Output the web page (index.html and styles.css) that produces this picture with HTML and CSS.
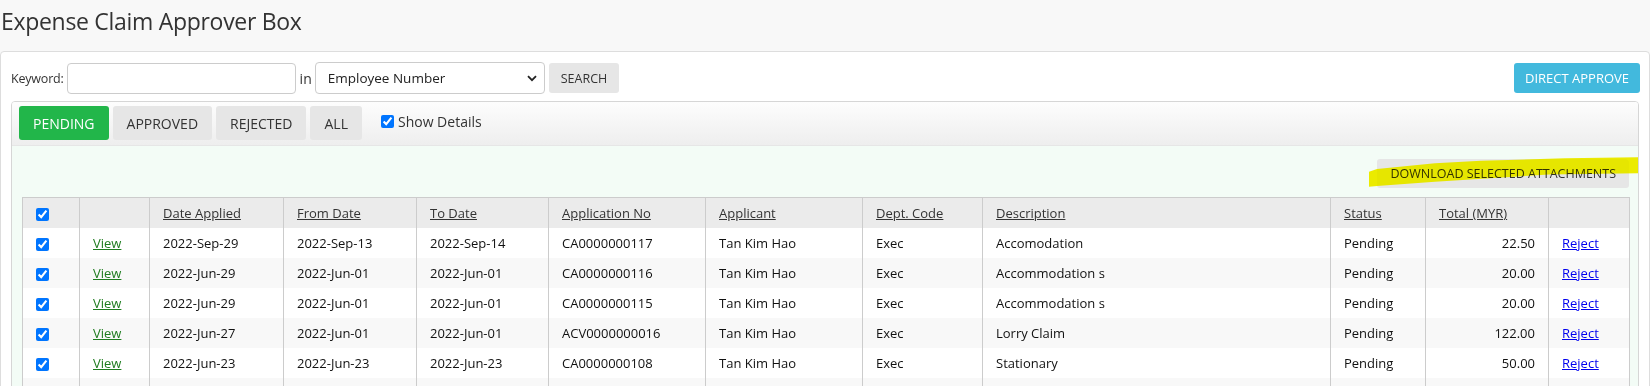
FILE: index.html
```html
<!DOCTYPE html>
<html lang="en">
<head>
    <meta charset="UTF-8">
    <meta name="viewport" content="width=device-width, initial-scale=1.0">
    <title>Expense Claim Approver Box</title>
    <link rel="stylesheet" href="styles.css">
</head>
<body>
    <h1 class="page-title">Expense Claim Approver Box</h1>

    <div class="box">
        <form class="search-bar" id="searchForm">
            <label for="keyword">Keyword:</label>
            <input type="text" id="keyword" name="keyword" class="field keyword">
            <span class="in">in</span>
            <div class="select-wrap">
                <select id="searchBy" name="searchBy" class="field search-by">
                    <option>Employee Number</option>
                    <option>Employee Name</option>
                    <option>Application No</option>
                </select>
                <svg class="chevron" width="10" height="7" viewBox="0 0 10 7"><path d="M1 1.2l4 4 4-4" fill="none" stroke="#222" stroke-width="1.8"/></svg>
            </div>
            <button type="submit" class="btn btn-gray btn-search">SEARCH</button>
            <button type="button" class="btn btn-info btn-direct">DIRECT APPROVE</button>
        </form>

        <div class="panel">
            <div class="panel-heading">
                <button type="button" class="tab active">PENDING</button>
                <button type="button" class="tab">APPROVED</button>
                <button type="button" class="tab">REJECTED</button>
                <button type="button" class="tab">ALL</button>
                <label class="show-details"><input type="checkbox" checked> Show Details</label>
            </div>

            <div class="panel-body">
                <div class="actions">
                    <div class="download-wrap">
                        <button type="button" class="btn btn-gray btn-download">DOWNLOAD SELECTED ATTACHMENTS</button>
                        <!-- highlighter mark over the button -->
                        <svg class="marker" width="270" height="31" viewBox="0 0 270 31"><path d="M0 14.7 L8 12 L66 6.3 L112 3.7 L196 1.3 L270 0.3 L270 16.3 L180 17.5 L66 24.7 L8 29 L0 29.7 Z" fill="#ebeb00"/></svg>
                    </div>
                </div>

                <table class="claims">
                    <colgroup>
                        <col style="width:57px">
                        <col style="width:70px">
                        <col style="width:134px">
                        <col style="width:133px">
                        <col style="width:132px">
                        <col style="width:157px">
                        <col style="width:157px">
                        <col style="width:120px">
                        <col style="width:348px">
                        <col style="width:95px">
                        <col style="width:123px">
                        <col style="width:81px">
                    </colgroup>
                    <thead>
                        <tr>
                            <th><input type="checkbox" checked></th>
                            <th></th>
                            <th><a href="#">Date Applied</a></th>
                            <th><a href="#">From Date</a></th>
                            <th><a href="#">To Date</a></th>
                            <th><a href="#">Application No</a></th>
                            <th><a href="#">Applicant</a></th>
                            <th><a href="#">Dept. Code</a></th>
                            <th><a href="#">Description</a></th>
                            <th><a href="#">Status</a></th>
                            <th><a href="#">Total (MYR)</a></th>
                            <th></th>
                        </tr>
                    </thead>
                    <tbody>
                        <tr>
                            <td><input type="checkbox" checked></td>
                            <td><a href="#" class="view">View</a></td>
                            <td>2022-Sep-29</td>
                            <td>2022-Sep-13</td>
                            <td>2022-Sep-14</td>
                            <td>CA0000000117</td>
                            <td>Tan Kim Hao</td>
                            <td>Exec</td>
                            <td>Accomodation</td>
                            <td>Pending</td>
                            <td class="num">22.50</td>
                            <td><a href="#" class="reject">Reject</a></td>
                        </tr>
                        <tr>
                            <td><input type="checkbox" checked></td>
                            <td><a href="#" class="view">View</a></td>
                            <td>2022-Jun-29</td>
                            <td>2022-Jun-01</td>
                            <td>2022-Jun-01</td>
                            <td>CA0000000116</td>
                            <td>Tan Kim Hao</td>
                            <td>Exec</td>
                            <td>Accommodation s</td>
                            <td>Pending</td>
                            <td class="num">20.00</td>
                            <td><a href="#" class="reject">Reject</a></td>
                        </tr>
                        <tr>
                            <td><input type="checkbox" checked></td>
                            <td><a href="#" class="view">View</a></td>
                            <td>2022-Jun-29</td>
                            <td>2022-Jun-01</td>
                            <td>2022-Jun-01</td>
                            <td>CA0000000115</td>
                            <td>Tan Kim Hao</td>
                            <td>Exec</td>
                            <td>Accommodation s</td>
                            <td>Pending</td>
                            <td class="num">20.00</td>
                            <td><a href="#" class="reject">Reject</a></td>
                        </tr>
                        <tr>
                            <td><input type="checkbox" checked></td>
                            <td><a href="#" class="view">View</a></td>
                            <td>2022-Jun-27</td>
                            <td>2022-Jun-01</td>
                            <td>2022-Jun-01</td>
                            <td>ACV0000000016</td>
                            <td>Tan Kim Hao</td>
                            <td>Exec</td>
                            <td>Lorry Claim</td>
                            <td>Pending</td>
                            <td class="num">122.00</td>
                            <td><a href="#" class="reject">Reject</a></td>
                        </tr>
                        <tr>
                            <td><input type="checkbox" checked></td>
                            <td><a href="#" class="view">View</a></td>
                            <td>2022-Jun-23</td>
                            <td>2022-Jun-23</td>
                            <td>2022-Jun-23</td>
                            <td>CA0000000108</td>
                            <td>Tan Kim Hao</td>
                            <td>Exec</td>
                            <td>Stationary</td>
                            <td>Pending</td>
                            <td class="num">50.00</td>
                            <td><a href="#" class="reject">Reject</a></td>
                        </tr>
                        <tr>
                            <td><input type="checkbox" checked></td>
                            <td></td>
                            <td></td>
                            <td></td>
                            <td></td>
                            <td></td>
                            <td></td>
                            <td></td>
                            <td></td>
                            <td></td>
                            <td></td>
                            <td></td>
                        </tr>
                    </tbody>
                </table>
            </div>
        </div>
    </div>
</body>
</html>
```

FILE: styles.css
```css
html, body {
    height: 100%;
    overflow: hidden;
}
body {
    margin: 0;
    background: #f8f8f8;
    font-family: "Open Sans", "Noto Sans", Arial, sans-serif;
    color: #333;
}
.page-title {
    margin: 0;
    height: 51px;
    box-sizing: border-box;
    padding: 5px 0 0 1px;
    font-size: 23px;
    letter-spacing: -0.3px;
    line-height: 32px;
    font-weight: 400;
    color: #333;
}

/* outer box */
.box {
    background: #fff;
    border: 1px solid #ddd;
    border-radius: 4px;
    padding: 10px 9px 0 10px;
    min-height: 400px;
}
.search-bar {
    display: flex;
    align-items: center;
    height: 32px;
}
.search-bar label {
    font-size: 12.5px;
    letter-spacing: -0.2px;
    margin-right: 3px;
}
.field {
    box-sizing: border-box;
    border: 1px solid #ccc;
    border-radius: 4px;
    background: #fff;
    font-family: inherit;
    color: #222;
}
.keyword {
    width: 229px;
    height: 31px;
}
.in {
    font-size: 14px;
    margin: 0 3px 0 4px;
}
.select-wrap {
    position: relative;
    margin-right: 4px;
}
.search-by {
    appearance: none;
    -webkit-appearance: none;
    display: block;
    width: 230px;
    height: 32px;
    padding: 0 0 0 12px;
    font-size: 13.5px;
}
.chevron {
    position: absolute;
    right: 8px;
    top: 13px;
    pointer-events: none;
}
.btn {
    border: none;
    border-radius: 3px;
    font-family: inherit;
    cursor: pointer;
    white-space: nowrap;
}
.btn-gray {
    background: #e6e6e6;
    color: #333;
}
.btn-search {
    height: 30px;
    padding: 0 12px;
    font-size: 12.5px;
}
.btn-info {
    background: #42b9dd;
    color: #fff;
}
.btn-direct {
    margin-left: auto;
    height: 30px;
    padding: 0 11px;
    font-size: 13px;
}

/* tabs panel */
.panel {
    margin: 7px 1px 0 0;
    border: 1px solid #d6d6d6;
    border-radius: 4px;
    overflow: hidden;
}
.panel-heading {
    display: flex;
    align-items: center;
    gap: 4px;
    padding: 4px 7px 5px;
    border-bottom: 1px solid #e6e6e6;
    background: linear-gradient(#fdfdfd, #eeeeee);
}
.tab {
    height: 34px;
    padding: 0 14px;
    border: none;
    border-radius: 3px;
    background: #e6e6e6;
    color: #333;
    font-family: inherit;
    font-size: 14px;
    cursor: pointer;
}
.tab.active {
    background: #22b64a;
    color: #fff;
}
.show-details {
    display: flex;
    align-items: center;
    margin: 0 0 3px 15px;
    font-size: 14px;
    color: #333;
}
.show-details input {
    margin: 0 4px 0 0;
}
.panel-body {
    background: #f3fcf6;
    padding: 13px 9px 10px 10px;
}
.actions {
    display: flex;
    justify-content: flex-end;
    margin-bottom: 9px;
}
.download-wrap {
    position: relative;
}
.btn-download {
    display: block;
    height: 29px;
    padding: 0 13px;
    font-size: 12.5px;
}
.marker {
    position: absolute;
    left: -8px;
    top: -2px;
    mix-blend-mode: darken;
    pointer-events: none;
}

/* claims table */
.claims {
    width: 100%;
    table-layout: fixed;
    border-collapse: collapse;
    border: 1px solid #ccc;
    background: #fff;
    font-size: 13px;
}
.claims th,
.claims td {
    height: 30px;
    padding: 0 13px;
    border-left: 1px solid #ccc;
    border-right: 1px solid #ccc;
    text-align: left;
    white-space: nowrap;
    overflow: hidden;
}
.claims th {
    background: #ebebeb;
    font-weight: 400;
}
.claims th a {
    color: #333;
}
.claims td {
    color: #111;
}
.claims tbody tr:nth-child(even) {
    background: #f8f8f8;
}
.claims input[type="checkbox"] {
    margin: 0;
    vertical-align: middle;
}
.claims .num {
    text-align: right;
}
.view {
    color: #1e7b1e;
}
.reject {
    color: #0000ee;
}
```
